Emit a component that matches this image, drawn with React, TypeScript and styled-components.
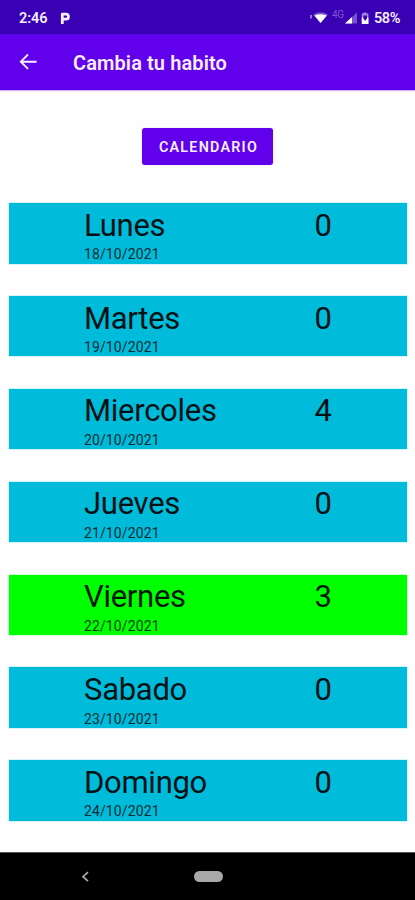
import React from "react";
import styled, { createGlobalStyle } from "styled-components";

const GlobalStyle = createGlobalStyle`
  * { box-sizing: border-box; }
  body { margin: 0; background: #fff; font-family: Roboto, sans-serif; }
`;

const Screen = styled.div`
  display: flex;
  flex-direction: column;
  width: 415px;
  height: 900px;
  overflow: hidden;
  background: #fefefe;
`;

const StatusBar = styled.header`
  display: flex;
  align-items: center;
  flex: none;
  height: 34px;
  padding: 3px 15px 0 19px;
  background: #3a00b4;
  color: #f4edff;
`;

const StatusText = styled.span`
  font-size: 14.5px;
  font-weight: 600;
  line-height: 18px;
  letter-spacing: -0.1px;
`;

const Battery = styled(StatusText)`
  letter-spacing: -0.4px;
`;

const ParkingIcon = styled.svg`
  margin-left: 13px;
`;

const StatusIcons = styled.div`
  display: flex;
  align-items: center;
  margin-left: auto;
  margin-right: -1px;
`;

const AppBar = styled.div`
  display: flex;
  align-items: center;
  flex: none;
  height: 56px;
  padding-left: 18px;
  background: #6100ea;
  box-shadow: 0 1px 1px #c9b5ee;
`;

const Title = styled.h1`
  margin: 2px 0 0 34px;
  color: #f6efff;
  font-size: 20px;
  font-weight: 600;
  line-height: 24px;
  letter-spacing: 0.1px;
  white-space: nowrap;
`;

const Content = styled.main`
  display: flex;
  flex-direction: column;
  align-items: center;
  flex: 1;
  padding: 38px 8px 0 9px;
`;

const CalendarButton = styled.button`
  flex: none;
  width: 131px;
  height: 37px;
  margin: 0 1px 38.2px 0;
  padding: 1px 0 0 2px;
  border: 0;
  border-radius: 3px;
  background: #6100ea;
  color: #f6efff;
  font: 600 14.3px/18px Roboto, sans-serif;
  letter-spacing: 1.25px;
  box-shadow: 0 0 1px #a98ae8;
`;

const DayList = styled.ul`
  display: flex;
  flex-direction: column;
  gap: 32.4px;
  width: 100%;
  margin: 0;
  padding: 0;
  list-style: none;
`;

const DayRow = styled.li<{ $today: boolean }>`
  display: grid;
  grid-template-columns: 230px 1fr;
  grid-template-rows: 41px 18px;
  height: 60.45px;
  padding-left: 75px;
  background: ${(p) => (p.$today ? "#00ff00" : "#00bcda")};
  color: ${(p) => (p.$today ? "#041800" : "#021114")};
  box-shadow: 0 0 1px ${(p) => (p.$today ? "#00ff00" : "#00bcda")};
`;

const DayName = styled.span`
  padding-top: 1.5px;
  font-size: 31px;
  line-height: 41px;
  letter-spacing: -0.28px;
`;

const DayCount = styled(DayName)`
  padding-left: 0.5px;
`;

const DayDate = styled.span`
  padding-top: 0.3px;
  font-size: 14px;
  line-height: 21px;
  letter-spacing: 0.12px;
  opacity: 0.86;
`;

const NavBar = styled.nav`
  display: flex;
  align-items: center;
  flex: none;
  height: 48px;
  padding-left: 81px;
  border-top: 1px solid #555;
  background: #000;
`;

const HomePill = styled.span`
  width: 29px;
  height: 11px;
  margin-left: 104px;
  border-radius: 6px;
  background: #a8a8a8;
`;

const days = [
  { name: "Lunes", date: "18/10/2021", count: 0 },
  { name: "Martes", date: "19/10/2021", count: 0 },
  { name: "Miercoles", date: "20/10/2021", count: 4 },
  { name: "Jueves", date: "21/10/2021", count: 0 },
  { name: "Viernes", date: "22/10/2021", count: 3, today: true },
  { name: "Sabado", date: "23/10/2021", count: 0 },
  { name: "Domingo", date: "24/10/2021", count: 0 },
];

const NetworkLabel = styled.span`
  width: 12px;
  margin: -8px 1px 0 3px;
  color: #7d55d2;
  font-size: 10px;
  line-height: 10px;
  letter-spacing: -0.2px;
`;

export default function App() {
  return (
    <Screen>
      <GlobalStyle />
      <StatusBar>
        <StatusText>2:46</StatusText>
        <ParkingIcon width="11" height="13" viewBox="0 0 11 13">
          <path d="M2.3 12V2.2H6a2.4 2.4 0 0 1 0 4.9H2.8" fill="none" stroke="#f4edff" strokeWidth="2.8" strokeLinejoin="round" />
        </ParkingIcon>
        <StatusIcons>
          <svg width="19" height="13" viewBox="0 0 19 13">
            <path d="M1 3v3.5" stroke="#b79ae8" strokeWidth="1.5" />
            <path d="M3.2 2.6Q10.5-2 18 2.6L10.6 11z" fill="#7550c8" />
            <path d="M4.4 3.6Q10.5 1 16.8 3.6L10.6 11z" fill="#fff" />
          </svg>
          <NetworkLabel>4G</NetworkLabel>
          <svg width="13" height="13" viewBox="0 0 13 13">
            <path d="M0 11.5L12 .5v11z" fill="#7950ce" />
            <path d="M0 11.5L7 5V11.5z" fill="#fff" />
          </svg>
          <svg width="17" height="13" viewBox="0 0 17 13">
            <path d="M3.8 1.6H5.5V.4h3v1.2h1.9V12H3.8z" fill="#a689df" />
            <path d="M3.8 5.6h6.6V12H3.8z" fill="#fff" />
            <path d="M5.4 3.5h3.5v3L7.1 9 5.4 6.5z" fill="#3a00b4" />
          </svg>
        </StatusIcons>
        <Battery>58%</Battery>
      </StatusBar>
      <AppBar>
        <svg width="21" height="18" viewBox="0 0 21 18">
          <path d="M18.6 8.7H3.2M10 1.5L2.8 8.7l7.2 7.2" fill="none" stroke="#f6efff" strokeWidth="1.9" />
        </svg>
        <Title>Cambia tu habito</Title>
      </AppBar>
      <Content>
        <CalendarButton>CALENDARIO</CalendarButton>
        <DayList>
          {days.map((d) => (
            <DayRow key={d.date} $today={!!d.today}>
              <DayName>{d.name}</DayName>
              <DayCount>{d.count}</DayCount>
              <DayDate>{d.date}</DayDate>
            </DayRow>
          ))}
        </DayList>
      </Content>
      <NavBar>
        <svg width="9" height="12" viewBox="0 0 9 12">
          <path d="M7 1.2L2 5.7l5 4.5" fill="none" stroke="#aaa" strokeWidth="1.7" />
        </svg>
        <HomePill />
      </NavBar>
    </Screen>
  );
}
